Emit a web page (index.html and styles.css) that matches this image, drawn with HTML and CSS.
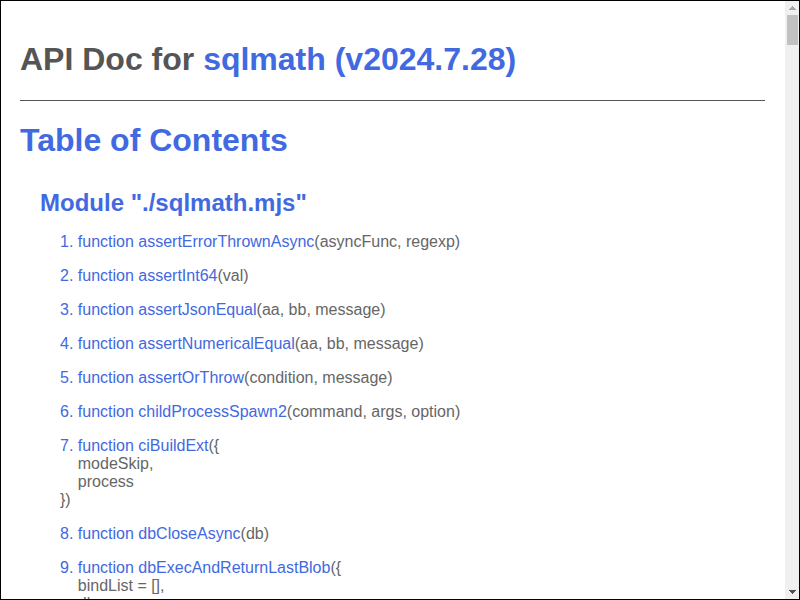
FILE: index.html
```html
<!DOCTYPE html>
<html lang="en">
<head>
<meta charset="utf-8">
<title>sqlmath API Doc</title>
<link rel="stylesheet" href="styles.css">
</head>
<body>
<div class="viewer">
<main class="doc">
<h1 class="title">API Doc for <a href="#home">sqlmath (v2024.7.28)</a></h1>
<nav class="toc">
<h1><a href="#toc">Table of Contents</a></h1>
<section class="module">
<h2><a href="#module">Module "./sqlmath.mjs"</a></h2>
<ul class="functions">
<li><a href="#f1">1. function assertErrorThrownAsync</a>(asyncFunc, regexp)</li>
<li><a href="#f2">2. function assertInt64</a>(val)</li>
<li><a href="#f3">3. function assertJsonEqual</a>(aa, bb, message)</li>
<li><a href="#f4">4. function assertNumericalEqual</a>(aa, bb, message)</li>
<li><a href="#f5">5. function assertOrThrow</a>(condition, message)</li>
<li><a href="#f6">6. function childProcessSpawn2</a>(command, args, option)</li>
<li><a href="#f7">7. function ciBuildExt</a>({
    modeSkip,
    process
})</li>
<li><a href="#f8">8. function dbCloseAsync</a>(db)</li>
<li><a href="#f9">9. function dbExecAndReturnLastBlob</a>({
    bindList = [],
    db,</li>
</ul>
</section>
</nav>
</main>
<div class="scrollbar" aria-hidden="true">
<svg class="arrow up" viewBox="0 0 14 14" shape-rendering="crispEdges"><path d="M7 5h1v1h1v1h1v1h1v1H4V8h1V7h1V6h1z"/></svg>
<div class="thumb"></div>
<svg class="arrow down" viewBox="0 0 14 14" shape-rendering="crispEdges"><path d="M4 5h7v1h-1v1H9v1H8v1H7V8H6V7H5V6H4z"/></svg>
</div>
</div>
</body>
</html>
```
FILE: styles.css
```css
* {
    box-sizing: border-box;
}
body {
    margin: 0;
    background: #fff;
    color: #555;
    font-family: "Liberation Sans", Arial, sans-serif;
    font-size: 16px;
    line-height: 18px;
}
a {
    color: #4169e1;
    text-decoration: none;
}
h1,
h2,
ul {
    margin: 0;
    padding: 0;
}
h1 {
    font-size: 32px;
    line-height: 36px;
}
h2 {
    font-size: 24px;
    line-height: 28px;
}
.viewer {
    display: flex;
    height: 100vh;
    border: 1px solid #000;
    overflow: hidden;
}
.doc {
    flex: 1;
    min-width: 0;
    padding: 40px 20px 0 19px;
    overflow: hidden;
}
.title {
    padding-bottom: 23px;
    border-bottom: 1px solid #555;
}
.toc {
    padding-top: 21px;
}
.module {
    padding: 31px 0 0 20px;
}
.functions {
    display: flex;
    flex-direction: column;
    gap: 16px;
    padding: 16px 0 0 20px;
    color: #666;
    list-style: none;
}
.functions li {
    white-space: pre-wrap;
}
.scrollbar {
    display: flex;
    flex-direction: column;
    flex: none;
    width: 14px;
    background: #f0f0f0;
}
.arrow {
    flex: none;
    width: 14px;
    height: 14px;
}
.up {
    fill: #a3a3a3;
}
.down {
    margin-top: auto;
    fill: #505050;
}
.thumb {
    height: 30px;
    margin: 0 1px 0 2px;
    background: #c1c1c1;
}
```
